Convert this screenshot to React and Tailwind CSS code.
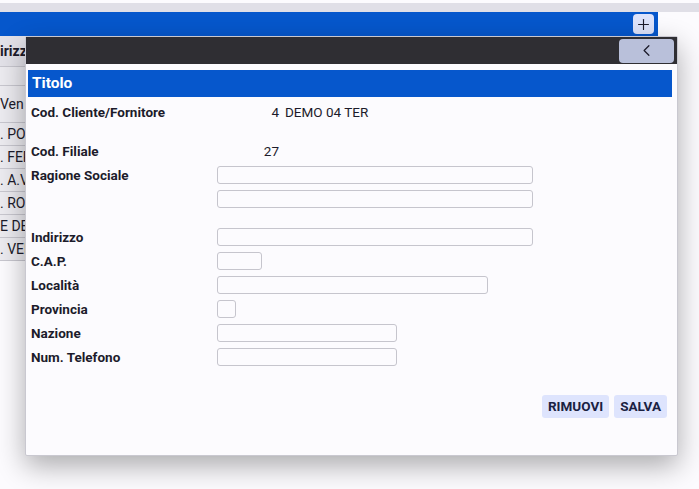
import React from 'react';
import { ChevronLeft, Plus } from 'lucide-react';

const rows = ['Ven', '. POS', '. FER', '. A.V', '. ROI', 'E DE', '. VEN'];

const fields = [
  { label: 'Ragione Sociale', w: 'w-[316px]' },
  { label: '', w: 'w-[316px]' },
  { gap: true },
  { label: 'Indirizzo', w: 'w-[316px]' },
  { label: 'C.A.P.', w: 'w-[45px]' },
  { label: 'Località', w: 'w-[271px]' },
  { label: 'Provincia', w: 'w-[19px]' },
  { label: 'Nazione', w: 'w-[180px]' },
  { label: 'Num. Telefono', w: 'w-[180px]' },
];

const Field = ({ label, w }) => (
  <div className="flex h-[24px] items-center">
    <div className="w-[186px] text-[13.5px] font-bold text-[#1c1b2b]">{label}</div>
    <input
      type="text"
      className={`h-[18px] ${w} rounded-[3px] border border-[#c6c5cd] bg-[#fcfbfe] outline-none`}
    />
  </div>
);

const App = () => {
  return (
    <div className="relative h-[489px] w-[699px] overflow-hidden bg-[#fcfbfe] font-['Roboto',sans-serif]">
      {/* page behind the dialog */}
      <div className="h-[3px]" />
      <div className="h-[9px] bg-[#e0dfe7]" />
      <div className="flex h-[24px] w-[658px] items-center justify-end bg-[#0657cc] pr-[4px]">
        <button className="flex h-[20px] w-[21px] items-center justify-center rounded-[4px] bg-[#dde3fb] text-[#1c1b2b]">
          <Plus size={17} strokeWidth={1.6} />
        </button>
      </div>
      <div className="w-[72px] bg-[#ecebf0] text-[14px] text-[#1c1b2b]">
        <div className="flex h-[31px] items-center border-b border-[#c8c7cf] bg-[#e3e2e9] font-bold">irizz</div>
        <div className="h-[19px] border-b border-[#c8c7cf]" />
        <div className="flex h-[37px] items-center border-b border-[#c8c7cf]">{rows[0]}</div>
        {rows.slice(1).map((r) => (
          <div key={r} className="flex h-[23px] items-center border-b border-[#c8c7cf] whitespace-nowrap">
            {r}
          </div>
        ))}
      </div>

      {/* dialog */}
      <div className="absolute left-[25px] top-[36px] flex h-[420px] w-[653px] flex-col rounded-[2px] border border-[#c9c8d0] bg-[#fcfbfe] shadow-[0_10px_28px_rgba(0,0,0,0.32)]">
        <div className="flex h-[27px] items-center justify-end bg-[#2f2e33] pr-[3px]">
          <button className="flex h-[24px] w-[55px] items-center justify-center rounded-[4px] bg-[#b9c0da] text-[#1c1b2b]">
            <ChevronLeft size={19} strokeWidth={1.6} />
          </button>
        </div>
        <div className="flex flex-1 flex-col pl-[2px] pr-[5px] pt-[6px]">
          <div className="flex h-[27px] items-center bg-[#0657cc] px-[4px] text-[15.5px] font-bold text-white">
            Titolo
          </div>
          <div className="pl-[3px] pt-[3px]">
            <div className="flex h-[24px] items-center">
              <div className="w-[186px] text-[13.5px] font-bold text-[#1c1b2b]">Cod. Cliente/Fornitore</div>
              <div className="w-[62px] text-right text-[13.5px] text-[#1c1b2b]">4</div>
              <div className="ml-[6px] text-[13.5px] text-[#1c1b2b]">DEMO 04 TER</div>
            </div>
            <div className="h-[15px]" />
            <div className="flex h-[24px] items-center">
              <div className="w-[186px] text-[13.5px] font-bold text-[#1c1b2b]">Cod. Filiale</div>
              <div className="w-[62px] text-right text-[13.5px] text-[#1c1b2b]">27</div>
            </div>
            {fields.map((f, i) =>
              f.gap ? <div key={i} className="h-[14px]" /> : <Field key={i} label={f.label} w={f.w} />
            )}
          </div>
          <div className="mt-[26px] flex justify-end gap-[5px] pr-[5px]">
            <button className="h-[23px] rounded-[3px] bg-[#dee4fd] px-[6px] text-[13.5px] font-bold text-[#1a2142]">
              RIMUOVI
            </button>
            <button className="h-[23px] rounded-[3px] bg-[#dee4fd] px-[6px] text-[13.5px] font-bold text-[#1a2142]">
              SALVA
            </button>
          </div>
        </div>
      </div>
    </div>
  );
};

export default App;
